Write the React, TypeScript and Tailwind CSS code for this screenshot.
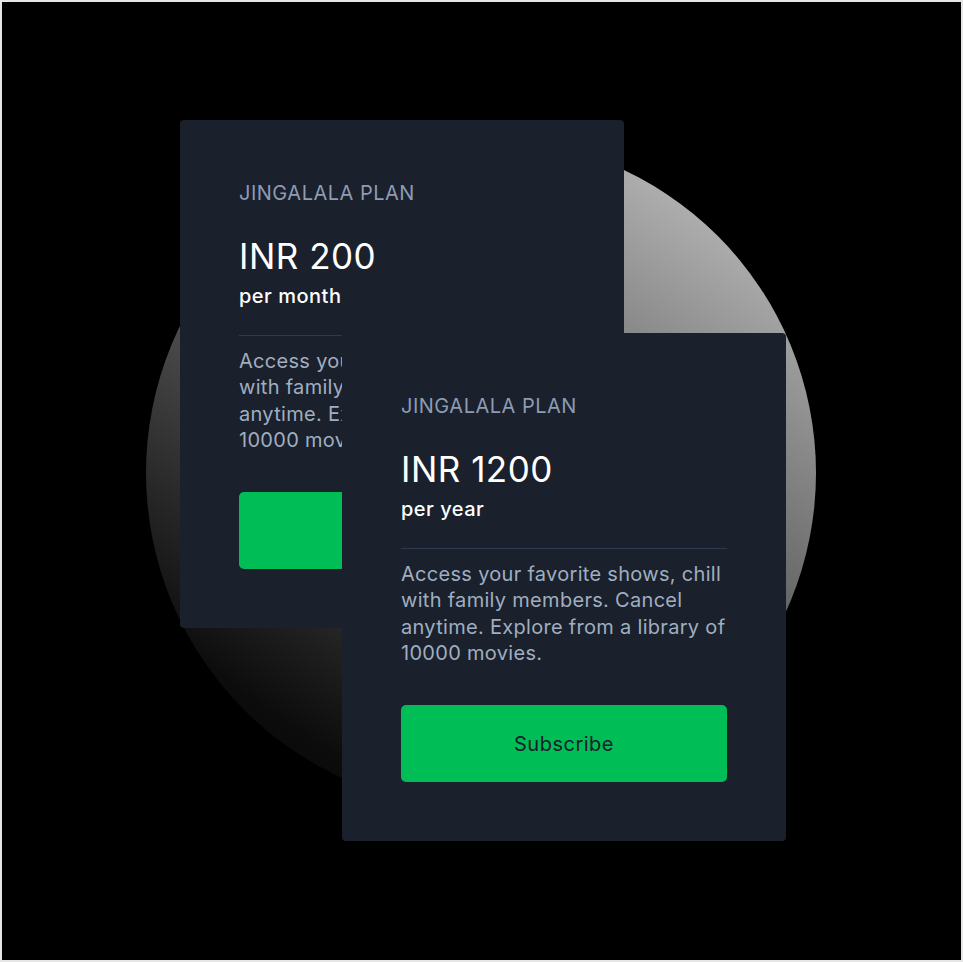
const plans = [
  { price: 'INR 200', period: 'per month', offset: 'ml-[178px] mt-[118px]' },
  { price: 'INR 1200', period: 'per year', offset: 'ml-[340px] mt-[331px]' },
];

const PlanCard = ({ price, period, offset }: { price: string; period: string; offset: string }) => (
  <div
    className={`${offset} [grid-area:1/1] self-start justify-self-start w-[444px] h-[508px] bg-[#1a202c] rounded-[4px] px-[59px] pt-[59px] flex flex-col`}
  >
    <p className="text-[20px] leading-[28px] text-[#8d9bb3] tracking-[0.5px]">JINGALALA PLAN</p>
    <p className="mt-[29px] text-[35px] leading-[40px] text-white tracking-[0.5px]">{price}</p>
    <p className="mt-[6px] text-[20px] leading-[28px] font-medium text-white tracking-[0.5px]">{period}</p>
    <div className="mt-[25px] h-px bg-[#2d3a4f]" />
    <p className="mt-[12px] text-[20px] leading-[26.3px] text-[#a0aec0] tracking-[0.3px]">
      Access your favorite shows, chill with family members. Cancel anytime. Explore from a library of 10000 movies.
    </p>
    <button className="mt-[39px] h-[77px] w-full rounded-[5px] bg-[#01bd56] text-[20px] text-[#1a202c] tracking-[0.5px]">
      Subscribe
    </button>
  </div>
);

export default function App() {
  return (
    <div className="w-[963px] h-[962px] bg-[#e6e6e6] p-[2px] font-['Inter',sans-serif]">
      <div className="w-full h-full bg-black grid overflow-hidden">
        {/* backdrop circle */}
        <div className="[grid-area:1/1] ml-[144px] mt-[136px] w-[670px] h-[670px] rounded-full bg-[linear-gradient(214deg,#cecece_0%,#a8a8a8_16%,#8a8a8a_28%,#6e6e6e_40%,#4c4c4c_55%,#2a2a2a_70%,#0c0c0c_84%,#000_100%)]" />
        {plans.map((p) => (
          <PlanCard key={p.price} {...p} />
        ))}
      </div>
    </div>
  );
}
